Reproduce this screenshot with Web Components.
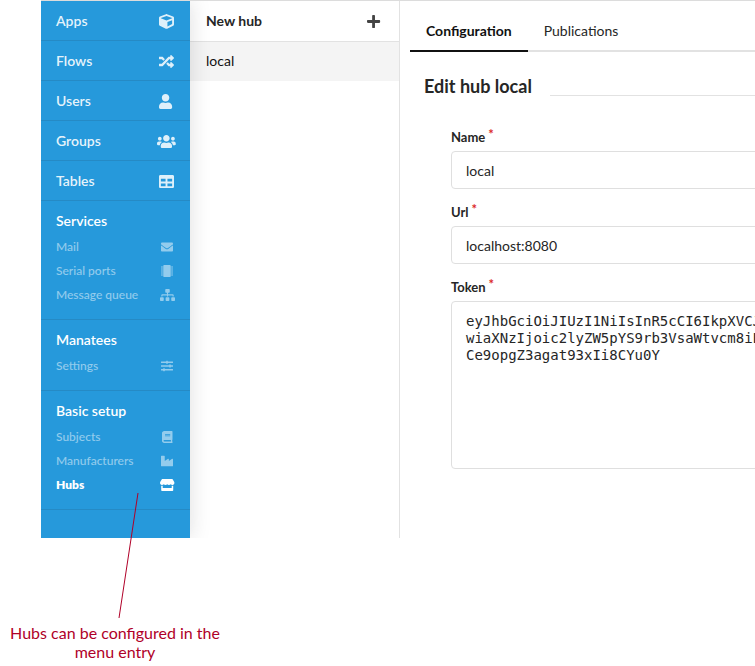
<!DOCTYPE html>
<html lang="en">
<head>
<meta charset="utf-8">
<title>Hubs</title>
<style>
  html, body { margin: 0; background: #fff; }
  body { font-family: Lato, "Liberation Sans", sans-serif; font-size: 14px; line-height: 14px; color: #262626; overflow-x: hidden; }
</style>
</head>
<body>
<hub-page>
  <side-bar slot="nav">
    <nav-item icon="cube">Apps</nav-item>
    <nav-item icon="random">Flows</nav-item>
    <nav-item icon="user">Users</nav-item>
    <nav-item icon="users">Groups</nav-item>
    <nav-item icon="table">Tables</nav-item>
    <nav-section heading="Services">
      <nav-item sub icon="mail">Mail</nav-item>
      <nav-item sub icon="chip">Serial ports</nav-item>
      <nav-item sub icon="sitemap">Message queue</nav-item>
    </nav-section>
    <nav-section heading="Manatees">
      <nav-item sub icon="sliders">Settings</nav-item>
    </nav-section>
    <nav-section heading="Basic setup">
      <nav-item sub icon="book">Subjects</nav-item>
      <nav-item sub icon="industry">Manufacturers</nav-item>
      <nav-item sub active icon="store">Hubs</nav-item>
    </nav-section>
  </side-bar>
  <hub-list slot="list">local</hub-list>
  <tab-bar slot="main"></tab-bar>
  <hub-form slot="main" heading="Edit hub local">
    <form-field label="Name" value="local"></form-field>
    <form-field label="Url" value="localhost:8080"></form-field>
    <form-field label="Token" multiline value="eyJhbGciOiJIUzI1NiIsInR5cCI6IkpXVCJ&#10;wiaXNzIjoic2lyZW5pYS9rb3VsaWtvcm8iL&#10;Ce9opgZ3agat93xIi8CYu0Y"></form-field>
  </hub-form>
  <call-out slot="note">Hubs can be configured in the menu entry</call-out>
</hub-page>

<script>
const ICONS = {
  cube: [512, 'M239.1 6.3l-208 78c-18.7 7-31.1 25-31.1 45v225.1c0 18.2 10.3 34.8 26.5 42.9l208 104c13.5 6.8 29.4 6.8 42.9 0l208-104c16.3-8.1 26.5-24.8 26.5-42.9V129.3c0-20-12.4-37.9-31.1-44.9l-208-78C262 2.2 250 2.2 239.1 6.3zM256 68.4l192 72v1.1l-192 78-192-78v-1.1l192-72zm32 356V275.5l160-65v133.9l-160 80z'],
  random: [512, 'M504.971 359.029c9.373 9.373 9.373 24.569 0 33.941l-80 79.984c-15.01 15.01-40.971 4.49-40.971-16.971V416h-58.785a12.004 12.004 0 0 1-8.773-3.812l-70.556-75.596 53.333-57.143L352 336h32v-39.981c0-21.438 25.943-31.998 40.971-16.971l80 79.981zM12 176h84l52.781 56.551 53.333-57.143-70.556-75.596A11.999 11.999 0 0 0 122.785 96H12c-6.627 0-12 5.373-12 12v56c0 6.627 5.373 12 12 12zm372 0v39.984c0 21.46 25.961 31.98 40.971 16.971l80-79.984c9.373-9.373 9.373-24.569 0-33.941l-80-79.981C409.943 24.021 384 34.582 384 56.019V96h-58.785a12.004 12.004 0 0 0-8.773 3.812L96 336H12c-6.627 0-12 5.373-12 12v56c0 6.627 5.373 12 12 12h110.785c3.326 0 6.503-1.381 8.773-3.812L352 176h32z'],
  user: [448, 'M224 256c70.7 0 128-57.3 128-128S294.7 0 224 0 96 57.3 96 128s57.3 128 128 128zm89.6 32h-16.7c-22.2 10.2-46.9 16-72.9 16s-50.6-5.8-72.9-16h-16.7C60.2 288 0 348.2 0 422.4V464c0 26.5 21.5 48 48 48h352c26.5 0 48-21.5 48-48v-41.6c0-74.2-60.2-134.4-134.4-134.4z'],
  users: [640, 'M96 224c35.3 0 64-28.7 64-64s-28.7-64-64-64-64 28.7-64 64 28.7 64 64 64zm448 0c35.3 0 64-28.7 64-64s-28.7-64-64-64-64 28.7-64 64 28.7 64 64 64zm32 32h-64c-17.6 0-33.5 7.1-45.1 18.6 40.3 22.1 68.9 62 75.1 109.4h66c17.7 0 32-14.3 32-32v-32c0-35.3-28.7-64-64-64zm-256 0c61.9 0 112-50.1 112-112S381.9 32 320 32 208 82.1 208 144s50.1 112 112 112zm76.8 32h-8.3c-20.8 10-43.9 16-68.5 16s-47.6-6-68.5-16h-8.3C179.6 288 128 339.6 128 403.2V432c0 26.5 21.5 48 48 48h288c26.5 0 48-21.5 48-48v-28.8c0-63.6-51.6-115.2-115.2-115.2zm-223.7-13.4C161.5 263.1 145.6 256 128 256H64c-35.3 0-64 28.7-64 64v32c0 17.7 14.3 32 32 32h65.9c6.3-47.4 34.9-87.3 75.2-109.4z'],
  table: [512, 'M464 32H48C21.49 32 0 53.49 0 80v352c0 26.51 21.49 48 48 48h416c26.51 0 48-21.49 48-48V80c0-26.51-21.49-48-48-48zM224 416H64v-96h160v96zm0-160H64v-96h160v96zm224 160H288v-96h160v96zm0-160H288v-96h160v96z'],
  mail: [512, 'M502.3 190.8c3.9-3.1 9.7-.2 9.7 4.7V400c0 26.5-21.5 48-48 48H48c-26.5 0-48-21.5-48-48V195.6c0-5 5.7-7.8 9.7-4.7 22.4 17.4 52.1 39.5 154.1 113.6 21.1 15.4 56.7 47.8 92.2 47.6 35.7.3 72-32.8 92.3-47.6 102-74.1 131.6-96.3 154-113.7zM256 320c23.2.4 56.6-29.2 73.4-41.4 132.7-96.3 142.8-104.7 173.4-128.7 5.8-4.5 9.2-11.5 9.2-18.9v-19c0-26.5-21.5-48-48-48H48c-26.5 0-48 21.5-48 48v19c0 7.4 3.4 14.3 9.2 18.9 30.6 23.9 40.7 32.4 173.4 128.7 16.8 12.2 50.2 41.8 73.4 41.4z'],
  chip: [512, 'M416 48v416c0 26.51-21.49 48-48 48H144c-26.51 0-48-21.49-48-48V48c0-26.51 21.49-48 48-48h224c26.51 0 48 21.49 48 48zM0 66h80v44H0zM0 150h80v44H0zM0 234h80v44H0zM0 318h80v44H0zM0 402h80v44H0zM432 66h80v44h-80zM432 150h80v44h-80zM432 234h80v44h-80zM432 318h80v44h-80zM432 402h80v44h-80z'],
  sitemap: [640, 'M128 352H32c-17.67 0-32 14.33-32 32v96c0 17.67 14.33 32 32 32h96c17.67 0 32-14.33 32-32v-96c0-17.67-14.33-32-32-32zm-24-80h192v48h48v-48h192v48h48v-57.59c0-21.17-17.23-38.41-38.41-38.41H344v-64h40c17.67 0 32-14.33 32-32V32c0-17.67-14.33-32-32-32H256c-17.67 0-32 14.33-32 32v96c0 17.67 14.33 32 32 32h40v64H94.41C73.23 224 56 241.23 56 262.41V320h48v-48zm264 80h-96c-17.67 0-32 14.33-32 32v96c0 17.67 14.33 32 32 32h96c17.67 0 32-14.33 32-32v-96c0-17.67-14.33-32-32-32zm240 0h-96c-17.67 0-32 14.33-32 32v96c0 17.67 14.33 32 32 32h96c17.67 0 32-14.33 32-32v-96c0-17.67-14.33-32-32-32z'],
  sliders: [512, 'M496 384H160v-16c0-8.8-7.2-16-16-16h-32c-8.8 0-16 7.2-16 16v16H16c-8.8 0-16 7.2-16 16v32c0 8.8 7.2 16 16 16h80v16c0 8.8 7.2 16 16 16h32c8.8 0 16-7.2 16-16v-16h336c8.8 0 16-7.2 16-16v-32c0-8.8-7.2-16-16-16zm0-160h-80v-16c0-8.8-7.2-16-16-16h-32c-8.8 0-16 7.2-16 16v16H16c-8.8 0-16 7.2-16 16v32c0 8.8 7.2 16 16 16h336v16c0 8.8 7.2 16 16 16h32c8.8 0 16-7.2 16-16v-16h80c8.8 0 16-7.2 16-16v-32c0-8.8-7.2-16-16-16zm0-160H288V48c0-8.8-7.2-16-16-16h-32c-8.8 0-16 7.2-16 16v16H16C7.2 64 0 71.2 0 80v32c0 8.8 7.2 16 16 16h208v16c0 8.8 7.2 16 16 16h32c8.8 0 16-7.2 16-16v-16h208c8.8 0 16-7.2 16-16V80c0-8.8-7.2-16-16-16z'],
  book: [448, 'M448 360V24c0-13.3-10.7-24-24-24H96C43 0 0 43 0 96v320c0 53 43 96 96 96h328c13.3 0 24-10.7 24-24v-16c0-7.5-3.5-14.3-8.9-18.7-4.2-15.4-4.2-59.3 0-74.7 5.4-4.3 8.9-11.1 8.9-18.6zM128 134c0-3.3 2.7-6 6-6h212c3.3 0 6 2.7 6 6v20c0 3.3-2.7 6-6 6H134c-3.3 0-6-2.7-6-6v-20zm0 64c0-3.3 2.7-6 6-6h212c3.3 0 6 2.7 6 6v20c0 3.3-2.7 6-6 6H134c-3.3 0-6-2.7-6-6v-20zm253.4 250H96c-17.7 0-32-14.3-32-32 0-17.6 14.4-32 32-32h285.4c-1.9 17.1-1.9 46.9 0 64z'],
  industry: [512, 'M475.115 163.781L336 252.309v-68.28c0-18.916-20.931-30.399-36.885-20.248L160 252.309V56c0-13.255-10.745-24-24-24H24C10.745 32 0 42.745 0 56v400c0 13.255 10.745 24 24 24h464c13.255 0 24-10.745 24-24V184.029c0-18.917-20.931-30.399-36.885-20.248z'],
  store: [616, 'M602 118.6L537.1 15C531.3 5.7 521 0 510 0H106C95 0 84.7 5.7 78.9 15L14 118.6c-33.5 53.5-3.8 127.9 58.8 136.4 4.5.6 9.1.9 13.7.9 29.6 0 55.8-13 73.8-33.1 18 20.1 44.3 33.1 73.8 33.1 29.6 0 55.8-13 73.8-33.1 18 20.1 44.3 33.1 73.8 33.1 29.6 0 55.8-13 73.8-33.1 18.1 20.1 44.3 33.1 73.8 33.1 4.7 0 9.2-.3 13.7-.9 62.8-8.4 92.6-82.8 59-136.4zM529.5 288c-10 0-19.9-1.5-29.5-3.8V384H116v-99.8c-9.6 2.2-19.5 3.8-29.5 3.8-6 0-12.1-.4-18-1.2-5.6-.8-11.1-2.1-16.4-3.6V480c0 17.7 14.3 32 32 32h448c17.7 0 32-14.3 32-32V283.2c-5.4 1.6-10.8 2.9-16.4 3.6-6.1.8-12.1 1.2-18.2 1.2z'],
  plus: [448, 'M416 208H272V64c0-17.67-14.33-32-32-32h-32c-17.67 0-32 14.33-32 32v144H32c-17.67 0-32 14.33-32 32v32c0 17.67 14.33 32 32 32h144v144c0 17.67 14.33 32 32 32h32c17.67 0 32-14.33 32-32V304h144c17.67 0 32-14.33 32-32v-32c0-17.67-14.33-32-32-32z']
};

const define = (name, render) => customElements.define(name, class extends HTMLElement {
  connectedCallback() {
    if (this.shadowRoot) return;
    const t = document.createElement('template');
    t.innerHTML = render(this);
    this.attachShadow({ mode: 'open' }).append(t.content.cloneNode(true));
  }
});

define('ui-icon', el => {
  const [w, d] = ICONS[el.getAttribute('name')];
  return `<style>
    :host { display: flex; justify-content: center; align-items: center; width: 18px; height: 14px; }
    svg { flex: none; height: var(--glyph, 15px); fill: currentColor; overflow: visible; }
  </style><svg viewBox="0 0 ${w} 512" aria-hidden="true"><path d="${d}"/></svg>`;
});

define('hub-page', () => `<style>
    :host { display: block; overflow: hidden; }
    .shell { display: grid; grid-template-columns: 149px 210px minmax(0, 1fr); margin-left: 41px; border-top: 1px solid #dcdcdc; }
    main { margin-right: -24px; padding-left: 10px; }
  </style>
  <div class="shell"><slot name="nav"></slot><slot name="list"></slot><main><slot name="main"></slot></main></div>
  <slot name="note"></slot>`);

define('side-bar', () => `<style>
    :host { display: block; background: #2699db; box-shadow: 0 0 20px rgba(34,36,38,.15); clip-path: inset(0 -24px 0 0); z-index: 1; }
    nav { padding-bottom: 28px; }
  </style><nav aria-label="Main"><slot></slot></nav>`);

define('nav-item', el => `<style>
    :host { display: block; }
    a { display: flex; justify-content: space-between; align-items: center; padding: 13px 15px 12px; border-bottom: 1px solid rgba(34,36,38,.12); color: rgba(255,255,255,.9); font-weight: 600; text-decoration: none; }
    ui-icon { color: rgba(255,255,255,.85); }
    :host([sub]) a { padding: 6px 0; border: 0; font-size: 12px; line-height: 12px; font-weight: 500; color: rgba(255,255,255,.5); }
    :host([sub]) ui-icon { --glyph: 12px; width: 16px; height: 12px; color: inherit; }
    :host([active]) a { color: #fff; font-weight: 800; }
  </style><a href="#"><slot></slot><ui-icon name="${el.getAttribute('icon')}"></ui-icon></a>`);

define('nav-section', el => `<style>
    :host { display: block; padding: 13px 15px 12px; border-bottom: 1px solid rgba(34,36,38,.12); }
    h2 { margin: 0 0 7px; font-size: 14px; line-height: 14px; font-weight: 600; color: #fff; }
  </style><h2>${el.getAttribute('heading')}</h2><slot></slot>`);

define('hub-list', () => `<style>
    :host { display: block; border-right: 1px solid #e2e2e2; }
    button, a { box-sizing: border-box; display: flex; align-items: center; justify-content: space-between; width: 100%; padding: 13px 16px; font: inherit; line-height: 14px; }
    button { border: 0; border-bottom: 1px solid #e2e2e2; background: #fff; color: #262626; font-weight: 700; }
    a { background: #f4f4f4; color: #111; text-decoration: none; padding-top: 12px; }
    ui-icon { color: #444; }
  </style><button type="button">New hub<ui-icon name="plus"></ui-icon></button><a href="#"><slot></slot></a>`);

define('tab-bar', () => `<style>
    :host { display: block; padding-top: 8px; }
    div { display: flex; border-bottom: 2px solid #e2e2e2; }
    button { margin: 0 0 -2px; padding: 15px 16px 12px; border: 0; border-bottom: 2px solid transparent; background: none; font: inherit; line-height: 14px; color: #262626; }
    button[aria-selected=true] { font-weight: 700; color: #111; border-color: #111; }
  </style><div role="tablist"><button role="tab" type="button" aria-selected="true">Configuration</button><button role="tab" type="button" aria-selected="false">Publications</button></div>`);

define('hub-form', el => `<style>
    :host { display: block; padding: 23px 0 0 14px; }
    header { display: flex; gap: 18px; }
    h1 { margin: 0; font-size: 18px; line-height: 22px; font-weight: 700; color: #262626; white-space: nowrap; }
    header::after { content: ""; flex: 1; height: 20px; border-bottom: 1px solid #e2e2e2; }
    form { display: grid; gap: 14px; padding: 31px 0 0 27px; }
  </style><header><h1>${el.getAttribute('heading')}</h1></header><form><slot></slot></form>`);

define('form-field', el => {
  const v = el.getAttribute('value');
  return `<style>
    :host { display: block; }
    label { display: block; margin-bottom: 5px; font-size: 13px; line-height: 18px; font-weight: 700; }
    sup { color: #db2828; font-weight: 700; line-height: 0; margin-left: 3px; font-size: 13px; vertical-align: 3px; }
    input, textarea { box-sizing: border-box; display: block; width: 100%; border: 1px solid #dfdfdf; border-radius: 4px; padding: 0 14px; margin: 0; background: #fff; color: #262626; outline: 0; }
    input { height: 38px; font: inherit; }
    textarea { height: 168px; padding: 11px 14px; font: 14px/17px "DejaVu Sans Mono", "Liberation Mono", monospace; resize: none; overflow: hidden; white-space: pre; }
  </style><label for="f">${el.getAttribute('label')}<sup>*</sup></label>` +
  (el.hasAttribute('multiline') ? `<textarea id="f" spellcheck="false">${v}</textarea>` : `<input id="f" type="text" value="${v}">`);
});

define('call-out', () => `<style>
    :host { display: block; position: relative; z-index: 2; box-sizing: border-box; width: 230px; padding: 85px 8px 0 8px; color: #b00028; font-size: 16px; line-height: 19px; font-weight: 400; text-align: center; }
    svg { position: absolute; left: 118px; top: -45px; width: 21px; height: 125px; }
  </style><svg viewBox="0 0 21 125" aria-hidden="true"><path d="M20 0L1 125" stroke="#b00028" fill="none"/></svg><slot></slot>`);
</script>
</body>
</html>
